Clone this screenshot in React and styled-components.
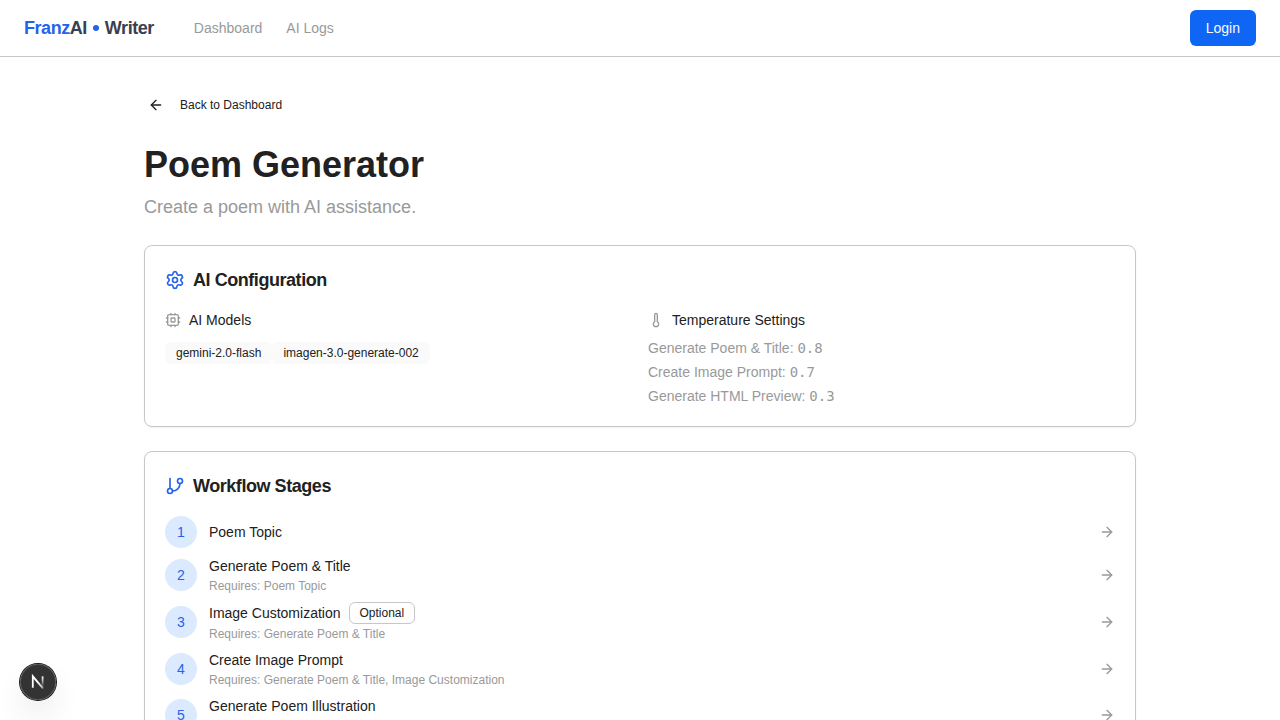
import React from "react";
import styled, { createGlobalStyle } from "styled-components";
import { ArrowLeft, ArrowRight, GitBranch, Settings, Thermometer } from "lucide-react";

const GlobalStyle = createGlobalStyle`
  *, *::before, *::after { box-sizing: border-box; }
  html, body { margin: 0; height: 100%; overflow: hidden; }
  body {
    background: #fff;
    color: #212121;
    font-family: "Liberation Sans", Arial, Helvetica, sans-serif;
    font-size: 14px;
    line-height: 20px;
  }
  h1, h2, h3, p, ul, ol { margin: 0; padding: 0; list-style: none; }
  svg { display: block; flex: none; }
`;

const Header = styled.header`
  display: flex;
  align-items: center;
  height: 57px;
  padding: 0 24px;
  border-bottom: 1px solid #c7c7c7;
`;

const Brand = styled.a`
  color: #374151;
  font-size: 18px;
  font-weight: 700;
  line-height: 28px;
  letter-spacing: -0.45px;
  white-space: nowrap;
`;

const BrandAccent = styled.span`
  color: #2563eb;
`;

const BrandDot = styled.span`
  display: inline-block;
  width: 6px;
  height: 6px;
  margin: 0 6.3px 0 5.7px;
  border-radius: 50%;
  background: #2563eb;
  vertical-align: 3px;
`;

const Nav = styled.nav`
  display: flex;
  gap: 24px;
  margin-left: 40px;
  color: #999;
`;

const LoginButton = styled.button`
  height: 36px;
  margin-left: auto;
  padding: 0 16px;
  border: 0;
  border-radius: 6px;
  background: #0f66f5;
  color: #fafafa;
  font: inherit;
`;

const Main = styled.main`
  width: 1024px;
  margin: 0 auto;
  padding: 32px 16px;
`;

const BackLink = styled.a`
  display: flex;
  align-items: center;
  gap: 16px;
  height: 32px;
  padding-left: 4px;
  margin-bottom: 24px;
  font-size: 12px;
`;

const PageTitle = styled.h1`
  font-size: 36px;
  line-height: 40px;
`;

const PageSubtitle = styled.p`
  margin: 8px 0 24px;
  color: #999;
  font-size: 18px;
  line-height: 28px;
`;

const Card = styled.section`
  margin-bottom: 24px;
  padding: 20px;
  border: 1px solid #c7c7c7;
  border-radius: 8px;
  box-shadow: 0 1px 2px rgba(0, 0, 0, 0.05);
`;

const CardTitle = styled.h2`
  display: flex;
  align-items: center;
  gap: 8px;
  margin-bottom: 16px;
  font-size: 18px;
  line-height: 28px;
  letter-spacing: -0.45px;
  svg { color: #2563eb; }
`;

const ConfigGrid = styled.div`
  display: grid;
  grid-template-columns: 1fr 1fr;
  gap: 16px;
`;

const ConfigHeading = styled.h3`
  display: flex;
  align-items: center;
  gap: 8px;
  font-size: 14px;
  font-weight: 400;
  svg { color: #999; }
`;

const BadgeList = styled.div`
  display: flex;
  margin-top: 12px;
`;

const Badge = styled.span`
  padding: 2px 10px;
  border: 1px solid ${(p) => (p.$outline ? "#c7c7c7" : "transparent")};
  border-radius: 6px;
  background: ${(p) => (p.$outline ? "transparent" : "#fafafa")};
  font-size: 12px;
  line-height: 16px;
`;

const TemperatureList = styled.ul`
  display: grid;
  gap: 4px;
  margin-top: 8px;
  color: #999;
`;

const Temperature = styled.li`
  height: 20px;
`;

const Value = styled.span`
  font-family: Menlo, "DejaVu Sans Mono", monospace;
`;

const StageList = styled.ol`
  display: flex;
  flex-direction: column;
  gap: 8px;
`;

const StageRow = styled.li`
  display: flex;
  align-items: center;
  gap: 12px;
  > svg { color: #999; }
`;

const StageNumber = styled.span`
  display: flex;
  align-items: center;
  justify-content: center;
  width: 32px;
  height: 32px;
  border-radius: 50%;
  background: #dbeafe;
  color: #2563eb;
`;

const StageBody = styled.div`
  flex: 1;
`;

const StageName = styled.div`
  display: flex;
  align-items: center;
  gap: 8px;
`;

const StageRequires = styled.p`
  margin-top: 2px;
  color: #999;
  font-size: 12px;
  line-height: 16px;
`;

const DevBadge = styled.div`
  position: fixed;
  left: 20px;
  bottom: 20px;
  width: 36px;
  height: 36px;
  border-radius: 50%;
  background: rgba(0, 0, 0, 0.8);
  box-shadow: 0 0 0 1px #171717, inset 0 0 0 1px rgba(255, 255, 255, 0.14),
    0 16px 32px -8px rgba(0, 0, 0, 0.24);
`;

const temperatures = [
  ["Generate Poem & Title", "0.8"],
  ["Create Image Prompt", "0.7"],
  ["Generate HTML Preview", "0.3"],
];

const stages = [
  { name: "Poem Topic" },
  { name: "Generate Poem & Title", requires: "Poem Topic" },
  { name: "Image Customization", requires: "Generate Poem & Title", optional: true },
  { name: "Create Image Prompt", requires: "Generate Poem & Title, Image Customization" },
  { name: "Generate Poem Illustration", requires: "Create Image Prompt" },
];

function CpuIcon() {
  return (
    <svg width="16" height="16" viewBox="0 0 24 24" fill="none" stroke="currentColor" strokeWidth="2" strokeLinecap="round" strokeLinejoin="round">
      <rect width="16" height="16" x="4" y="4" rx="2" />
      <rect width="6" height="6" x="9" y="9" rx="1" />
      <path d="M15 2v2M15 20v2M2 15h2M2 9h2M20 15h2M20 9h2M9 2v2M9 20v2" />
    </svg>
  );
}

function NextMark() {
  return (
    <svg width="36" height="36" viewBox="0 0 36 36" fill="none">
      <defs>
        <linearGradient id="diagonal" x1="18" y1="18" x2="24.5" y2="26" gradientUnits="userSpaceOnUse">
          <stop stopColor="#fff" />
          <stop offset="0.6" stopColor="#fff" stopOpacity="0.7" />
          <stop offset="1" stopColor="#fff" stopOpacity="0" />
        </linearGradient>
        <linearGradient id="stem" x1="22" y1="12.5" x2="22" y2="23.5" gradientUnits="userSpaceOnUse">
          <stop stopColor="#fff" />
          <stop offset="1" stopColor="#fff" stopOpacity="0" />
        </linearGradient>
      </defs>
      <path d="M23.2 24.6L12.8 12.3V23.8" stroke="url(#diagonal)" strokeWidth="1.8" />
      <path d="M22.6 12.4V23.5" stroke="url(#stem)" strokeWidth="1.8" />
    </svg>
  );
}

export default function App() {
  return (
    <>
      <GlobalStyle />
      <Header>
        <Brand>
          <BrandAccent>Franz</BrandAccent>AI<BrandDot />Writer
        </Brand>
        <Nav>
          <a>Dashboard</a>
          <a>AI Logs</a>
        </Nav>
        <LoginButton>Login</LoginButton>
      </Header>
      <Main>
        <BackLink>
          <ArrowLeft size={16} />
          Back to Dashboard
        </BackLink>
        <PageTitle>Poem Generator</PageTitle>
        <PageSubtitle>Create a poem with AI assistance.</PageSubtitle>
        <Card>
          <CardTitle>
            <Settings size={20} />
            AI Configuration
          </CardTitle>
          <ConfigGrid>
            <div>
              <ConfigHeading>
                <CpuIcon />
                AI Models
              </ConfigHeading>
              <BadgeList>
                <Badge>gemini-2.0-flash</Badge>
                <Badge>imagen-3.0-generate-002</Badge>
              </BadgeList>
            </div>
            <div>
              <ConfigHeading>
                <Thermometer size={16} />
                Temperature Settings
              </ConfigHeading>
              <TemperatureList>
                {temperatures.map(([label, value]) => (
                  <Temperature key={label}>
                    {label}: <Value>{value}</Value>
                  </Temperature>
                ))}
              </TemperatureList>
            </div>
          </ConfigGrid>
        </Card>
        <Card>
          <CardTitle>
            <GitBranch size={20} />
            Workflow Stages
          </CardTitle>
          <StageList>
            {stages.map((stage, i) => (
              <StageRow key={stage.name}>
                <StageNumber>{i + 1}</StageNumber>
                <StageBody>
                  <StageName>
                    {stage.name}
                    {stage.optional && <Badge $outline>Optional</Badge>}
                  </StageName>
                  {stage.requires && <StageRequires>Requires: {stage.requires}</StageRequires>}
                </StageBody>
                <ArrowRight size={16} />
              </StageRow>
            ))}
          </StageList>
        </Card>
      </Main>
      <DevBadge>
        <NextMark />
      </DevBadge>
    </>
  );
}
